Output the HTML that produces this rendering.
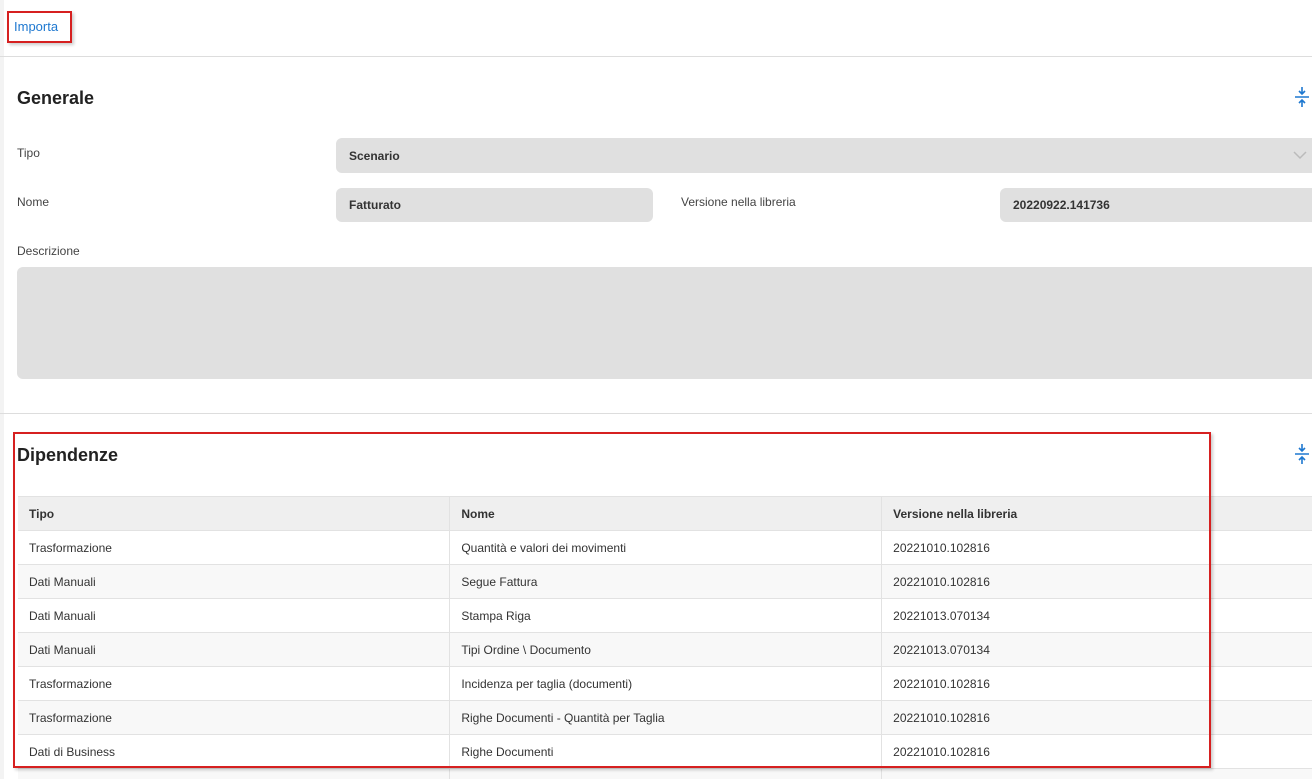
<!DOCTYPE html>
<html style="width:1312px;height:779px;overflow:hidden"><head><meta charset="utf-8"><style>
*{box-sizing:border-box;margin:0;padding:0}
body{width:1312px;height:779px;overflow:hidden;background:#fff;font-family:"Liberation Sans",sans-serif;color:#333;position:relative}
.abs{position:absolute}
.lbl{font-size:12px;color:#444}
.inp{background:#e0e0e0;border-radius:6px;font-size:12px;font-weight:bold;color:#333;padding-left:13px;display:flex;align-items:center}
h2{font-size:18px;font-weight:bold;color:#222}
table{border-collapse:collapse;font-size:12px;color:#333}
td,th{height:34px;border-bottom:1px solid #e2e2e2;border-right:1px solid #e2e2e2;padding-left:11px;text-align:left;width:432px}
th{background:#efefef;font-weight:bold;border-top:1px solid #e2e2e2}
tr.alt td{background:#f8f8f8}
</style></head><body>
<div class="abs" style="left:0;top:0;width:4px;height:779px;background:#f3f3f3"></div>
<div class="abs" style="left:7px;top:11px;width:65px;height:32px;border:2px solid #d62020;box-shadow:2px 2px 3px rgba(0,0,0,.2)"></div>
<div class="abs" style="left:14px;top:19px;font-size:13px;color:#1e78d0">Importa</div>
<div class="abs" style="left:0;top:56px;width:1312px;height:1px;background:#ddd"></div>

<h2 class="abs" style="left:17px;top:88px">Generale</h2>
<svg class="abs" style="left:1294px;top:86px" width="16" height="22" viewBox="0 0 16 22"><g stroke="#1e78d0" stroke-width="1.6" fill="none"><path d="M8 1v7M5 5l3 3 3-3M1 11h14M8 21v-7M5 17l3-3 3 3"/></g></svg>

<div class="abs lbl" style="left:17px;top:146px">Tipo</div>
<div class="abs inp" style="left:336px;top:138px;width:990px;height:35px">Scenario</div>
<svg class="abs" style="left:1293px;top:151px" width="14" height="9"><path d="M1 1l6 6 6-6" stroke="#bbb" stroke-width="1.5" fill="none"/></svg>

<div class="abs lbl" style="left:17px;top:195px">Nome</div>
<div class="abs inp" style="left:336px;top:188px;width:317px;height:34px">Fatturato</div>
<div class="abs lbl" style="left:681px;top:195px">Versione nella libreria</div>
<div class="abs inp" style="left:1000px;top:188px;width:330px;height:34px">20220922.141736</div>

<div class="abs lbl" style="left:17px;top:244px">Descrizione</div>
<div class="abs" style="left:17px;top:267px;width:1310px;height:112px;background:#e0e0e0;border-radius:6px"></div>

<div class="abs" style="left:0;top:413px;width:1312px;height:1px;background:#ddd"></div>

<h2 class="abs" style="left:17px;top:445px">Dipendenze</h2>
<svg class="abs" style="left:1294px;top:443px" width="16" height="22" viewBox="0 0 16 22"><g stroke="#1e78d0" stroke-width="1.6" fill="none"><path d="M8 1v7M5 5l3 3 3-3M1 11h14M8 21v-7M5 17l3-3 3 3"/></g></svg>

<div class="abs" style="left:18px;top:496px;width:1296px;height:283px;overflow:hidden">
<table style="width:1296px">
<tr><th>Tipo</th><th>Nome</th><th>Versione nella libreria</th></tr>
<tr><td>Trasformazione</td><td>Quantità e valori dei movimenti</td><td>20221010.102816</td></tr>
<tr class="alt"><td>Dati Manuali</td><td>Segue Fattura</td><td>20221010.102816</td></tr>
<tr><td>Dati Manuali</td><td>Stampa Riga</td><td>20221013.070134</td></tr>
<tr class="alt"><td>Dati Manuali</td><td>Tipi Ordine \ Documento</td><td>20221013.070134</td></tr>
<tr><td>Trasformazione</td><td>Incidenza per taglia (documenti)</td><td>20221010.102816</td></tr>
<tr class="alt"><td>Trasformazione</td><td>Righe Documenti - Quantità per Taglia</td><td>20221010.102816</td></tr>
<tr><td>Dati di Business</td><td>Righe Documenti</td><td>20221010.102816</td></tr>
<tr class="alt"><td></td><td></td><td></td></tr>
</table>
</div>
<div class="abs" style="left:13px;top:432px;width:1198px;height:336px;border:2px solid #d62020;box-shadow:2px 2px 3px rgba(0,0,0,.2)"></div>
</body></html>
